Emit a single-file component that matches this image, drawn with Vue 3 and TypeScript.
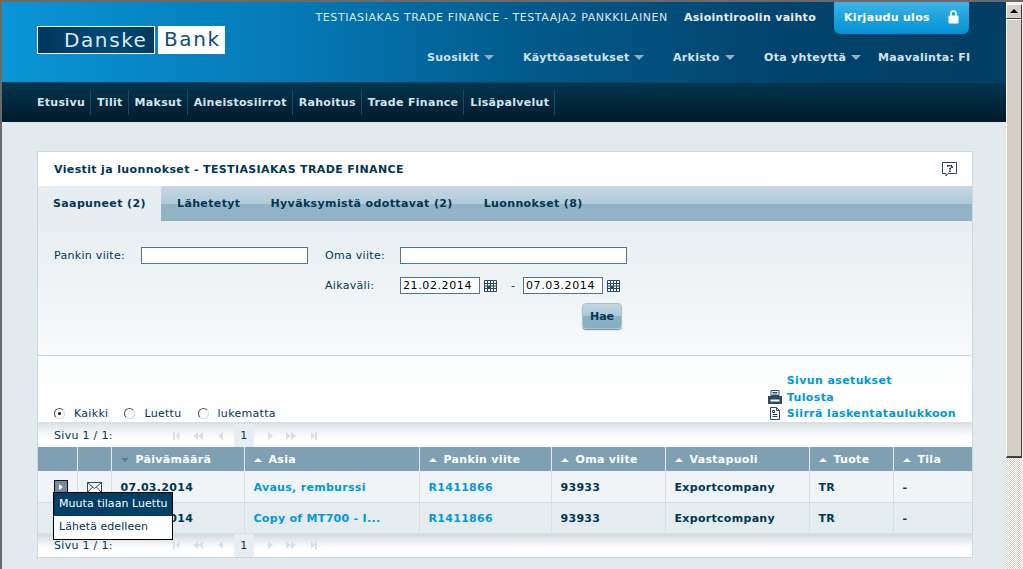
<script setup lang="ts">
const navLinks = ['Etusivu', 'Tilit', 'Maksut', 'Aineistosiirrot', 'Rahoitus', 'Trade Finance', 'Lisäpalvelut']
const topMenu = [
  { label: 'Suosikit', arrow: true, width: 96 },
  { label: 'Käyttöasetukset', arrow: true, width: 150 },
  { label: 'Arkisto', arrow: true, width: 91 },
  { label: 'Ota yhteyttä', arrow: true, width: 114 },
  { label: 'Maavalinta: FI', arrow: false, width: 93 },
]
const tabs = ['Saapuneet (2)', 'Lähetetyt', 'Hyväksymistä odottavat (2)', 'Luonnokset (8)']
const columns = [
  { label: '', width: 39 },
  { label: '', width: 34 },
  { label: 'Päivämäärä', width: 133, down: true },
  { label: 'Asia', width: 175 },
  { label: 'Pankin viite', width: 132 },
  { label: 'Oma viite', width: 114 },
  { label: 'Vastapuoli', width: 144 },
  { label: 'Tuote', width: 84 },
  { label: 'Tila', width: 79 },
]
const rows = [
  { date: '07.03.2014', subject: 'Avaus, remburssi', ref: 'R1411866' },
  { date: '07.03.2014', subject: 'Copy of MT700 - I...', ref: 'R1411866' },
]
const radios = [
  { label: 'Kaikki', on: true },
  { label: 'Luettu', on: false },
  { label: 'lukematta', on: false },
]
const pagers = ['top', 'bottom']
</script>

<template>
  <div class="window">
    <div class="page">
      <header class="masthead">
        <div class="logo">
          <span class="logo-dark">Danske</span>
          <span class="logo-light">Bank</span>
        </div>
        <div class="masthead-right">
          <div class="userline">
            <span class="user">TESTIASIAKAS TRADE FINANCE - TESTAAJA2 PANKKILAINEN</span>
            <b class="role">Asiointiroolin vaihto</b>
            <div class="logout">
              <span>Kirjaudu ulos</span>
              <svg width="11" height="14" viewBox="0 0 11 14">
                <path d="M3 6V3.500a2.500 2.500 0 0 1 5 0V6" fill="none" stroke="#fff" stroke-width="1.6" />
                <rect x="0.5" y="5.500" width="10" height="8" rx="1" fill="#fff" />
              </svg>
            </div>
          </div>
          <nav class="topmenu">
            <span v-for="m in topMenu" :key="m.label" class="topitem" :style="{ width: m.width + 'px' }">
              {{ m.label }}<i v-if="m.arrow" class="caret"></i>
            </span>
          </nav>
        </div>
      </header>
      <nav class="mainnav">
        <span v-for="n in navLinks" :key="n" class="navitem">{{ n }}</span>
      </nav>

      <main class="content">
        <section class="card">
          <div class="card-head">
            <h1>Viestit ja luonnokset - TESTIASIAKAS TRADE FINANCE</h1>
            <svg class="help" width="15" height="15" viewBox="0 0 15 15">
              <path d="M.5.5h14v11H6l-2 2.500v-2.500H.500z" fill="#fff" stroke="#2c4a5e" />
              <path d="M5 3h5v1.200h1V6H9v1.500H7V6h1.800V4.200H6.200V5H5zM7 8.500h2V10H7z" fill="#2c4a5e" />
            </svg>
          </div>
          <div class="tabs">
            <span v-for="(t, i) in tabs" :key="t" class="tab" :class="{ active: i === 0 }">{{ t }}</span>
          </div>
          <form class="search" @submit.prevent>
            <div class="search-row first">
              <label class="lbl-a">Pankin viite:</label>
              <input class="field wide-a" type="text" />
              <label class="lbl-b">Oma viite:</label>
              <input class="field wide-b" type="text" />
            </div>
            <div class="search-row second">
              <label class="lbl-b">Aikaväli:</label>
              <input class="field date" type="text" value="21.02.2014" />
              <svg class="cal" width="13" height="12" viewBox="0 0 13 12">
                <path d="M.5.5h12v11H.5zM.5 3.500h12M.5 6h12M.5 8.500h12M3.500.5v11M6.500.5v11M9.500.5v11" fill="none" stroke="#2c4a5e" />
                <rect x="4" y="6" width="3" height="3" fill="#2c4a5e" />
              </svg>
              <span class="dash">-</span>
              <input class="field date" type="text" value="07.03.2014" />
              <svg class="cal" width="13" height="12" viewBox="0 0 13 12">
                <path d="M.5.5h12v11H.5zM.5 3.500h12M.5 6h12M.5 8.500h12M3.500.5v11M6.500.5v11M9.500.5v11" fill="none" stroke="#2c4a5e" />
                <rect x="4" y="6" width="3" height="3" fill="#2c4a5e" />
              </svg>
            </div>
            <div class="search-row third">
              <button class="hae" type="submit">Hae</button>
            </div>
          </form>

          <div class="options">
            <div class="radios">
              <label v-for="r in radios" :key="r.label" class="radio">
                <i class="dot" :class="{ on: r.on }"></i>{{ r.label }}
              </label>
            </div>
            <div class="actions">
              <a class="action">Sivun asetukset</a>
              <a class="action">
                <svg class="action-icon" width="14" height="14" viewBox="0 0 14 14">
                  <path d="M3 .5h8v5H3z" fill="#fff" stroke="#2c4a5e" />
                  <path d="M4.500 2.500h5M4.500 4h5" stroke="#2c4a5e" />
                  <path d="M0 6h14v8H0z" fill="#2c4a5e" />
                  <path d="M2.500 9.500h9v2h-9z" fill="#fff" />
                </svg>Tulosta
              </a>
              <a class="action">
                <svg class="action-icon" width="14" height="13" viewBox="0 0 14 13">
                  <path d="M2.500.5h6l3 3v9h-9z" fill="#fff" stroke="#2c4a5e" />
                  <path d="M8.500.5v3h3M4.500 3.500h2v2h-2zM4.500 7.500h5M4.500 9.500h5" fill="none" stroke="#2c4a5e" />
                </svg>Siirrä laskentataulukkoon
              </a>
            </div>
          </div>

          <template v-for="p in pagers" :key="p">
            <div class="pager" :class="p">
              <span class="pager-label">Sivu 1 / 1:</span>
              <svg class="arrows-back" width="50" height="8" viewBox="0 0 50 8">
                <path d="M0 0h2v8H0zM6.500 0v8l-4-4zM25 0v8l-5-4zM30 0v8l-5-4zM50 0v8l-5-4z" fill="#d9dfe3" />
              </svg>
              <span class="pager-num">1</span>
              <svg class="arrows-next" width="49" height="8" viewBox="0 0 49 8">
                <path d="M0 0v8l5-4zM18 0v8l5-4zM23 0v8l5-4zM43 0v8l4-4zM47 0h2v8h-2z" fill="#d9dfe3" />
              </svg>
            </div>
            <div v-if="p === 'top'" class="table-wrap">
              <table class="grid">
                <colgroup>
                  <col v-for="(c, i) in columns" :key="i" :style="{ width: c.width + 'px' }" />
                </colgroup>
                <thead>
                  <tr>
                    <th v-for="(c, i) in columns" :key="i">
                      <template v-if="c.label">
                        <i class="sort" :class="{ down: c.down }"></i>{{ c.label }}
                      </template>
                    </th>
                  </tr>
                </thead>
                <tbody>
                  <tr v-for="(r, i) in rows" :key="i" :class="{ alt: i === 1 }">
                    <td>
                      <span v-if="i === 0" class="expander"><i></i></span>
                    </td>
                    <td class="mail-cell">
                      <svg v-if="i === 0" width="15" height="11" viewBox="0 0 15 11">
                        <path d="M.5.5h14v10H.5zM.5.5l7 6 7-6M.5 10.500l5-5.500M14.500 10.500l-5-5.500" fill="#fff" stroke="#2c4a5e" />
                      </svg>
                    </td>
                    <td class="strong">{{ r.date }}</td>
                    <td class="link">{{ r.subject }}</td>
                    <td class="link">{{ r.ref }}</td>
                    <td class="strong">93933</td>
                    <td class="strong">Exportcompany</td>
                    <td class="strong">TR</td>
                    <td class="strong">-</td>
                  </tr>
                </tbody>
              </table>
              <div class="popup">
                <div class="popup-item selected">Muuta tilaan Luettu</div>
                <div class="popup-item">Lähetä edelleen</div>
              </div>
            </div>
          </template>
        </section>
      </main>
    </div>
    <aside class="scrollbar">
      <div class="sb-btn"><i></i></div>
      <div class="sb-thumb"></div>
      <div class="sb-track"></div>
    </aside>
  </div>
</template>

<style>
html, body {
  margin: 0;
  height: 100%;
  overflow: hidden;
}
</style>

<style scoped>
.window {
  width: 1023px;
  height: 569px;
  display: flex;
  overflow: hidden;
  box-sizing: border-box;
  border-top: 2px solid #6a6a6a;
  border-left: 2px solid #6a6a6a;
  background: #e3eaee;
  font-family: "DejaVu Sans", Verdana, sans-serif;
  font-size: 11px;
  letter-spacing: 0.3px;
  color: #003755;
}
.page {
  width: 1004px;
  flex: none;
  overflow: hidden;
}
.masthead {
  height: 80px;
  display: flex;
  padding: 0 35px;
  background: linear-gradient(90deg, #0a95d6 0%, #0478b4 30%, #025a8c 52%, #02436c 78%, #023e63 100%);
}
.logo {
  display: flex;
  margin-top: 24px;
  gap: 3px;
  height: 28px;
  font-size: 20px;
  line-height: 27px;
  letter-spacing: 1.6px;
}
.logo-dark {
  width: 118px;
  box-sizing: border-box;
  padding-left: 26px;
  border: 1px solid #fff;
  background: linear-gradient(90deg, #00365c, #004a78 60%, #003a60);
  color: #dfe9f0;
}
.logo-light {
  width: 67px;
  box-sizing: border-box;
  padding-left: 6px;
  background: #fff;
  color: #0f5078;
}
.masthead-right {
  margin-left: auto;
  display: flex;
  flex-direction: column;
  align-items: flex-end;
}
.userline {
  display: flex;
  align-items: flex-start;
  height: 49px;
  margin-right: 2px;
  color: #d8e8f2;
}
.user {
  margin-top: 9px;
  letter-spacing: 0.57px;
  white-space: nowrap;
}
.role {
  margin: 9px 0 0 16px;
  color: #e6f0f6;
}
.logout {
  margin-left: 18px;
  width: 135px;
  height: 32px;
  box-sizing: border-box;
  padding: 0 10px 2px;
  display: flex;
  align-items: center;
  justify-content: space-between;
  border-radius: 0 0 6px 6px;
  background: linear-gradient(#3fb2e4, #1ea2dd 50%, #0291d4);
  color: #fff;
  font-weight: bold;
}
.topmenu {
  display: flex;
}
.topitem {
  display: block;
  font-weight: bold;
  color: #d0e3ef;
  white-space: nowrap;
}
.caret {
  display: inline-block;
  margin-left: 5px;
  vertical-align: 1px;
  border: 5px solid transparent;
  border-top-color: #8fb0c4;
  border-bottom: 0;
}
.mainnav {
  height: 40px;
  box-sizing: border-box;
  padding: 7px 0 0 35px;
  display: flex;
  background: linear-gradient(#03364f, #001a2c);
  border-top: 1px solid #0b4059;
}
.navitem {
  height: 25px;
  line-height: 25px;
  padding: 0 5px 0 6px;
  border-right: 1px solid #1d4a60;
  font-weight: bold;
  color: #d4e4ee;
}
.navitem:first-child {
  padding-left: 0;
}
.content {
  padding: 29px 33px 0 35px;
}
.card {
  background: #fff;
  border: 1px solid #ccd8de;
}
.card-head {
  height: 34px;
  display: flex;
  align-items: center;
  justify-content: space-between;
  padding: 0 15px 0 16px;
}
h1 {
  margin: 0;
  font-size: 11px;
  font-weight: bold;
  letter-spacing: 0.36px;
}
.tabs {
  height: 35px;
  display: flex;
  padding-left: 123px;
  background: linear-gradient(#c6d8e2, #b0cad8 50%, #92b3c6 52%, #92b3c6);
  position: relative;
}
.tab {
  padding: 11px 15px 0 16px;
  font-weight: bold;
  letter-spacing: 0.37px;
  white-space: nowrap;
}
.tab:nth-child(3) {
  padding-left: 15px;
}
.tab.active {
  position: absolute;
  left: 0;
  top: 0;
  bottom: 0;
  padding-left: 15px;
  width: 123px;
  box-sizing: border-box;
  background: #e7edf1;
}
.search {
  height: 135px;
  box-sizing: border-box;
  padding-top: 26px;
  background: linear-gradient(#e7edf1, #f8fafb);
  border-bottom: 1px solid #c9d6dd;
}
.search-row {
  display: flex;
  align-items: center;
}
.lbl-a {
  width: 103px;
  box-sizing: border-box;
  padding-left: 16px;
}
.lbl-b {
  width: 75px;
  box-sizing: border-box;
}
.field {
  box-sizing: border-box;
  height: 17px;
  padding: 0 2px;
  border: 1px solid #4d7890;
  background: #fff;
  font: 11px "DejaVu Sans", Verdana, sans-serif;
  letter-spacing: 0.6px;
  color: #000;
  outline: 0;
}
.wide-a {
  width: 167px;
  margin-right: 17px;
}
.wide-b {
  width: 227px;
}
.second {
  margin-top: 13px;
  padding-left: 287px;
}
.date {
  width: 80px;
}
.cal {
  margin-left: 4px;
}
.dash {
  width: 6px;
  margin: 0 6px 0 14px;
}
.third {
  margin-top: 9px;
  padding-left: 544px;
}
.hae {
  width: 40px;
  height: 26px;
  padding: 0;
  border: 1px solid #a9c3d1;
  border-radius: 4px;
  background: linear-gradient(#c4d9e3, #a9c6d6 50%, #8cb1c5 52%, #88aec2);
  box-shadow: 0 1px 1px #6a8a9c;
  color: #003755;
  font: bold 11px "DejaVu Sans", Verdana, sans-serif;
}
.options {
  height: 68px;
  display: flex;
  justify-content: space-between;
  align-items: flex-end;
  padding: 0 16px;
  border-bottom: 2px solid #d8e0e5;
  box-sizing: border-box;
  background: linear-gradient(#fbfcfd, #fff);
}
.radios {
  display: flex;
  height: 17px;
  align-items: center;
}
.radio {
  display: flex;
  align-items: center;
  margin-right: 16px;
}
.dot {
  width: 11px;
  height: 11px;
  box-sizing: border-box;
  margin-right: 9px;
  border-radius: 50%;
  border: 1px solid;
  border-color: #555 #d8d8d8 #d8d8d8 #555;
  background: #fff;
  position: relative;
}
.dot.on::after {
  content: '';
  position: absolute;
  left: 3px;
  top: 3px;
  width: 3px;
  height: 3px;
  background: #111;
  border-radius: 50%;
}
.actions {
  display: flex;
  flex-direction: column;
}
.action {
  height: 17px;
  line-height: 17px;
  position: relative;
  color: #0099dd;
  font-weight: bold;
  letter-spacing: 0.38px;
}
.action:last-child {
  height: 16px;
  line-height: 16px;
}
.action-icon {
  position: absolute;
  left: -19px;
  top: 1px;
}
.pager {
  height: 23px;
  display: flex;
  align-items: center;
  padding-left: 16px;
  background: linear-gradient(#dfe4e7, #fff 60%);
}
.pager-label {
  width: 119px;
}
.arrows-next {
  margin-left: 14px;
}
.pager-num {
  width: 20px;
  height: 23px;
  margin-left: 11px;
  line-height: 23px;
  text-align: center;
  background: #e7edf1;
}
.table-wrap {
  position: relative;
}
.grid {
  display: table;
  border-collapse: collapse;
  table-layout: fixed;
  width: 934px;
}
th {
  height: 24px;
  padding: 0 0 0 9px;
  box-sizing: border-box;
  background: #7f9fb2;
  border-right: 1px solid #e3ebef;
  color: #fff;
  font-weight: bold;
  text-align: left;
  white-space: nowrap;
}
th:last-child {
  border-right: 0;
}
.sort {
  display: inline-block;
  margin-right: 7px;
  vertical-align: 1px;
  border: 4px solid transparent;
  border-top: 0;
  border-bottom: 4px solid #fff;
}
.sort.down {
  border-bottom: 0;
  border-top: 4px solid #557a91;
}
td {
  height: 31px;
  padding: 2px 0 0 9px;
  box-sizing: border-box;
  background: #f0f4f7;
  border-right: 1px solid #d6dfe4;
  border-bottom: 1px solid #d6dfe4;
  white-space: nowrap;
  overflow: hidden;
}
td:last-child {
  border-right: 0;
}
.alt td {
  background: #e5ecef;
}
.strong {
  font-weight: bold;
}
.link {
  font-weight: bold;
  color: #0099dd;
}
.mail-cell svg {
  display: block;
}
.expander {
  display: block;
  width: 14px;
  height: 14px;
  margin-left: 7px;
  box-sizing: border-box;
  border: 1px solid #111;
  background: #6f8ca4;
  position: relative;
}
.expander i {
  position: absolute;
  left: 4px;
  top: 3px;
  border: 3px solid transparent;
  border-left: 4px solid #fff;
  border-right: 0;
}
.popup {
  position: absolute;
  left: 15px;
  top: 45px;
  width: 120px;
  box-sizing: border-box;
  border: 1px solid #000;
  background: #fff;
}
.popup-item {
  height: 23px;
  line-height: 22px;
  padding-left: 5px;
  letter-spacing: 0.05px;
}
.popup-item.selected {
  background: #003f66;
  color: #fff;
}
.pager.bottom {
  background: linear-gradient(#d3d9dd, #fff 60%);
}
.scrollbar {
  flex: 1;
  display: flex;
  flex-direction: column;
  padding: 2px 1px 0 0;
  background: #f2f1ee;
}
.sb-btn {
  height: 13px;
  background: #d4d0c8;
  border: 1px solid #fff;
  border-right-color: #404040;
  border-bottom-color: #404040;
  position: relative;
}
.sb-btn i {
  position: absolute;
  left: 3px;
  top: 4px;
  border: 4px solid transparent;
  border-top: 0;
  border-bottom: 4px solid #000;
}
.sb-thumb {
  height: 436px;
  background: #d4d0c8;
  border: 1px solid #fff;
  border-right-color: #404040;
  border-bottom-color: #404040;
  border-bottom-width: 2px;
}
.sb-track {
  flex: 1;
  background: repeating-conic-gradient(#d4d0c8 0 25%, #fff 0 50%) 0 0 / 2px 2px;
}
</style>
